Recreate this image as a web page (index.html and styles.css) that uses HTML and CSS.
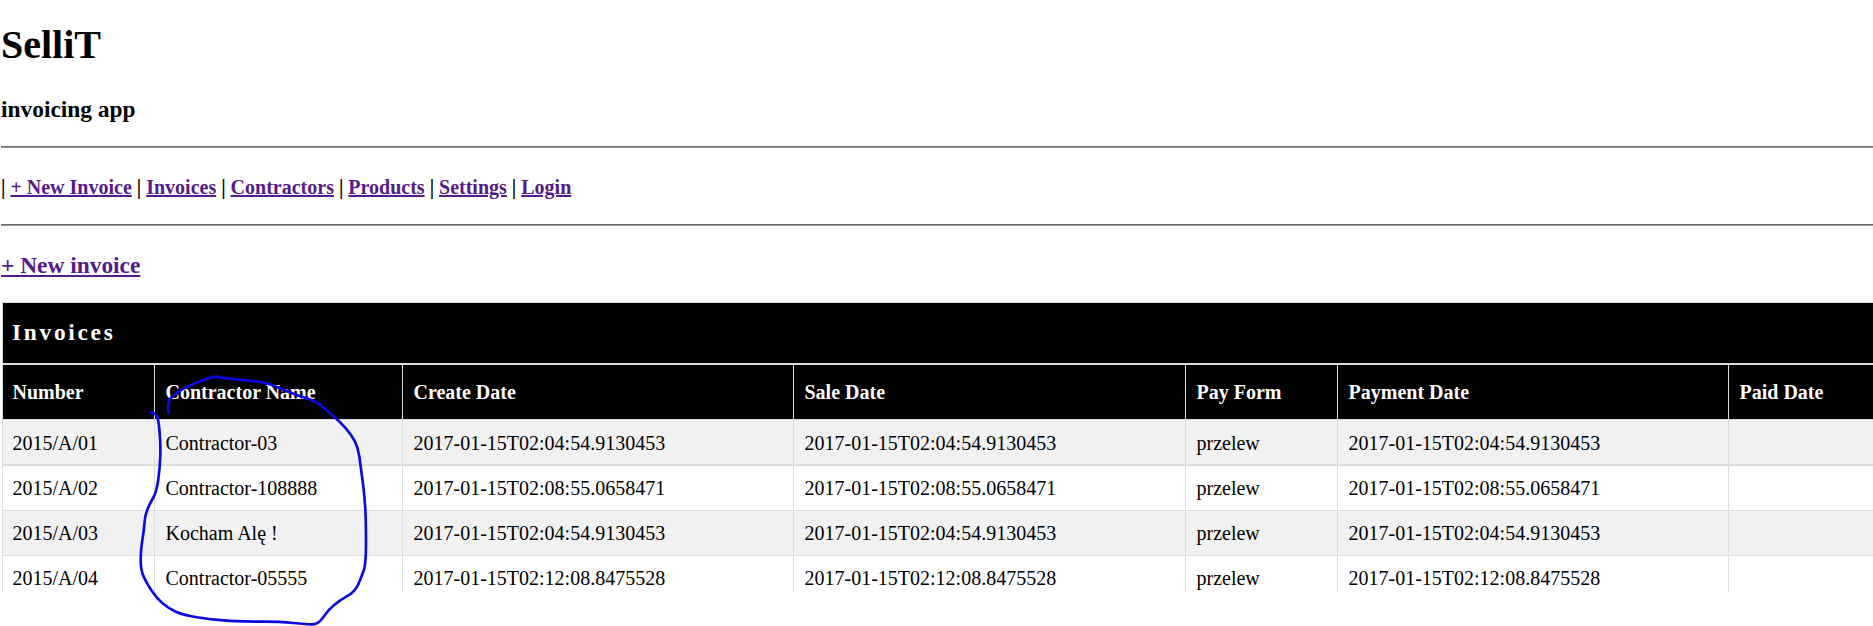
FILE: index.html
```html
<!DOCTYPE html>
<html lang="pl">
<head>
<meta charset="utf-8">
<title>SelliT</title>
<link rel="stylesheet" href="styles.css">
</head>
<body>
<header class="site-header">
  <h1 class="brand">SelliT</h1>
  <h3 class="tagline">invoicing app</h3>
  <hr class="rule">
  <p class="nav">| <a href="#">+ New Invoice</a> | <a href="#">Invoices</a> | <a href="#">Contractors</a> | <a href="#">Products</a> | <a href="#">Settings</a> | <a href="#">Login</a></p>
  <hr class="rule">
</header>
<h3 class="new-link"><a href="#">+ New invoice</a></h3>
<div class="table-clip">
  <table class="invoices">
    <caption class="invoices-title">Invoices</caption>
    <colgroup>
      <col class="c-number"><col class="c-name"><col class="c-date"><col class="c-date-wide"><col class="c-form"><col class="c-date"><col class="c-paid">
    </colgroup>
    <thead>
      <tr><th>Number</th><th>Contractor Name</th><th>Create Date</th><th>Sale Date</th><th>Pay Form</th><th>Payment Date</th><th>Paid Date</th></tr>
    </thead>
    <tbody>
      <tr><td>2015/A/01</td><td>Contractor-03</td><td>2017-01-15T02:04:54.9130453</td><td>2017-01-15T02:04:54.9130453</td><td>przelew</td><td>2017-01-15T02:04:54.9130453</td><td></td></tr>
      <tr><td>2015/A/02</td><td>Contractor-108888</td><td>2017-01-15T02:08:55.0658471</td><td>2017-01-15T02:08:55.0658471</td><td>przelew</td><td>2017-01-15T02:08:55.0658471</td><td></td></tr>
      <tr><td>2015/A/03</td><td>Kocham Alę !</td><td>2017-01-15T02:04:54.9130453</td><td>2017-01-15T02:04:54.9130453</td><td>przelew</td><td>2017-01-15T02:04:54.9130453</td><td></td></tr>
      <tr><td>2015/A/04</td><td>Contractor-05555</td><td>2017-01-15T02:12:08.8475528</td><td>2017-01-15T02:12:08.8475528</td><td>przelew</td><td>2017-01-15T02:12:08.8475528</td><td></td></tr>
    </tbody>
  </table>
</div>
<svg class="scribble" viewBox="0 0 780 798" aria-hidden="true">
  <path d="M146 158L144.5 141Q143 125 154 112.5Q165 100 192.5 85Q220 70 252.5 59Q285 48 295 50.5Q305 53 337.5 56.5Q370 60 405 64Q440 68 460 76.5Q480 85 505 95Q530 105 560 115Q590 125 607.5 140Q625 155 642.5 170Q660 185 677.5 205Q695 225 705 245Q715 265 718.5 292.5Q722 320 727.5 360Q733 400 735.5 440Q738 480 738 545Q738 610 731.5 630Q725 650 715 672.5Q705 695 682.5 707.5Q660 720 642.5 735Q625 750 616.5 762.5Q608 775 599 784Q590 793 575 793Q560 793 520 789Q480 785 430 785Q380 785 330 782.5Q280 780 235 772.5Q190 765 167.5 755Q145 745 127.5 730Q110 715 95 692.5Q80 670 71 650Q62 630 62 600Q62 570 67 540Q72 510 73.5 487.5Q75 465 82.5 447.5Q90 430 100 412.5Q110 395 115 357.5Q120 320 121 285Q122 250 118.5 212.5Q115 175 110 167.5Q105 160 99 158.5L93 157"/>
</svg>
</body>
</html>
```
FILE: styles.css
```css
html, body {
  height: 626px;
  overflow: hidden;
}
body {
  margin: 0 0 0 1px;
  background: #fff;
  color: #000;
  font-family: "Liberation Serif", "Times New Roman", serif;
  font-size: 20px;
}
a {
  color: #551a8b;
}
.brand {
  margin: 0;
  padding-top: 21px;
  font-size: 40px;
}
.tagline {
  margin: 28px 0 0;
  font-size: 23.4px;
}
.rule {
  margin: 23px 0 0;
  border: 0;
  border-top: 1px solid #666;
  border-bottom: 1px solid #999;
}
.nav {
  margin: 28px 0 25px;
  font-weight: bold;
}
.new-link {
  margin: 26px 0 0;
  font-size: 23.4px;
}
.table-clip {
  margin: 23px 0 0;
  height: 290px;
  overflow: hidden;
}
.invoices {
  width: 1900px;
  table-layout: fixed;
  border-collapse: collapse;
  margin-left: 1px;
}
.invoices-title {
  height: 61px;
  padding: 0 9px;
  background: #000;
  border: 1px solid #ddd;
  border-bottom: 0;
  color: #fff;
  font-size: 23.4px;
  font-weight: bold;
  letter-spacing: 2.7px;
  line-height: 58px;
  text-align: left;
  box-sizing: border-box;
}
.c-number { width: 152px; }
.c-name { width: 248px; }
.c-date { width: 391px; }
.c-date-wide { width: 392px; }
.c-form { width: 152px; }
.c-paid { width: 174px; }
.invoices th, .invoices td {
  padding: 0 10px 0 10.5px;
  text-align: left;
  white-space: nowrap;
}
.invoices th:first-child, .invoices td:first-child {
  padding-left: 9.5px;
}
.invoices th {
  height: 54px;
  background: #000;
  color: #fff;
  border: 1px solid #ddd;
  border-top: 2px solid #ddd;
  border-bottom: 0;
}
.invoices td {
  height: 44px;
  border: 1px solid #ddd;
}
.invoices tbody tr:nth-child(odd) {
  background: #f1f1f1;
}
.invoices tbody tr:first-child td {
  height: 42px;
  border-bottom-width: 2px;
  padding-top: 2px;
}
.scribble {
  position: absolute;
  left: 120px;
  top: 360px;
  width: 260px;
  height: 266px;
  fill: none;
  stroke: #0a0ae0;
  stroke-width: 8;
  stroke-linecap: round;
  stroke-linejoin: round;
}
```
